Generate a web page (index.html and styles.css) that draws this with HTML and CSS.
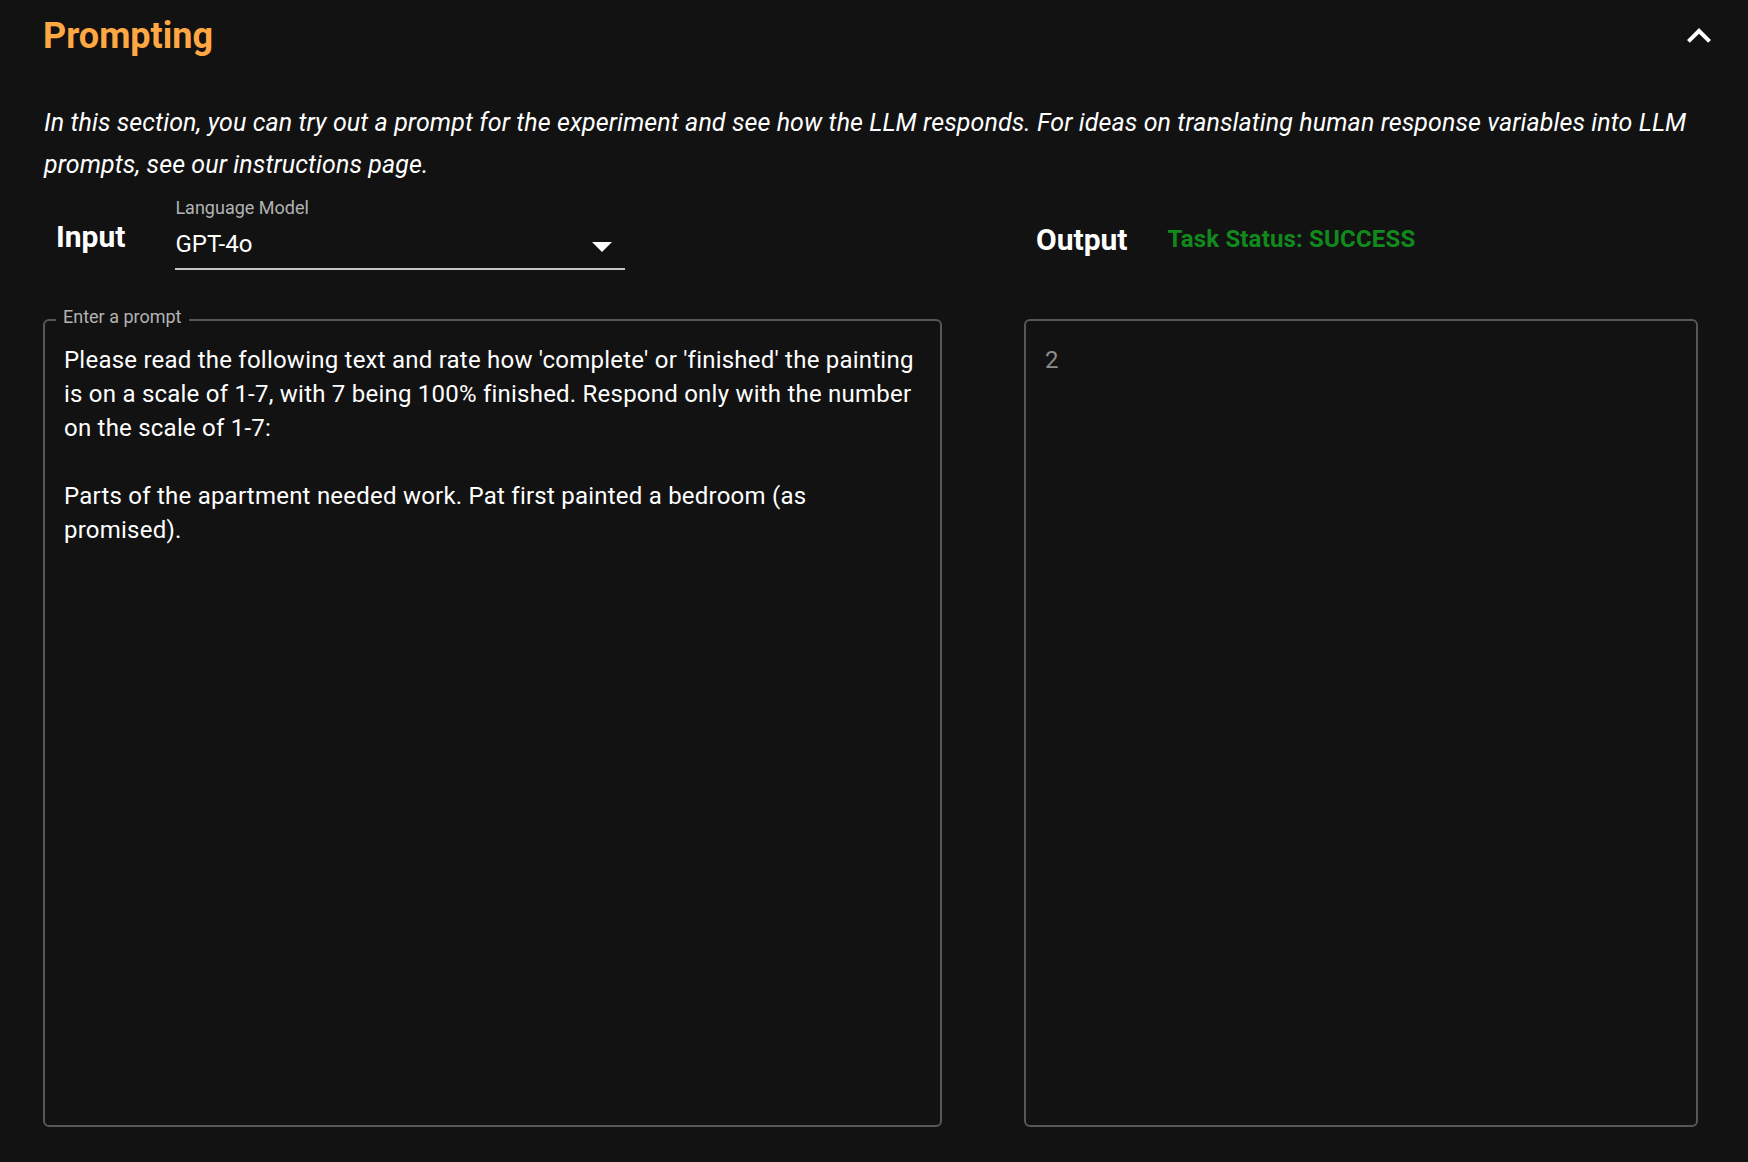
FILE: index.html
```html
<!DOCTYPE html>
<html lang="en">
<head>
<meta charset="utf-8">
<title>Prompting</title>
<link rel="stylesheet" href="styles.css">
</head>
<body>
<main class="page">
  <header class="section-header">
    <h2 class="section-title">Prompting</h2>
    <button class="collapse-btn" aria-label="Collapse">
      <svg viewBox="0 0 24 24" width="48" height="48"><path d="M12 8l-6 6 1.41 1.41L12 10.83l4.59 4.58L18 14z" fill="#ffffff"/></svg>
    </button>
  </header>
  <p class="intro">In this section, you can try out a prompt for the experiment and see how the LLM responds. For ideas on translating human response variables into LLM prompts, see our instructions page.</p>

  <div class="workspace">
    <div class="pane-head input-head">
      <h3 class="pane-title input-title">Input</h3>
      <div class="select">
        <div class="select-label">Language Model</div>
        <div class="select-field">
          <span class="select-value">GPT-4o</span>
          <svg class="select-arrow" viewBox="0 0 10 5" width="20" height="10"><path d="M0 0l5 5 5-5z" fill="#ffffff"/></svg>
        </div>
      </div>
    </div>
    <div class="pane-head output-head">
      <h3 class="pane-title output-title">Output</h3>
      <span class="status">Task Status: SUCCESS</span>
    </div>

    <fieldset class="prompt-box">
      <legend class="prompt-legend">Enter a prompt</legend>
      <div class="prompt-text">Please read the following text and rate how 'complete' or 'finished' the painting is on a scale of 1-7, with 7 being 100% finished. Respond only with the number on the scale of 1-7:

Parts of the apartment needed work. Pat first painted a bedroom (as promised).</div>
    </fieldset>
    <div class="output-box">
      <div class="output-text">2</div>
    </div>
  </div>
</main>
</body>
</html>
```

FILE: styles.css
```css
* { box-sizing: border-box; }

html, body {
  margin: 0;
  padding: 0;
  background: #121212;
}

body {
  font-family: Roboto, "Noto Sans", "Liberation Sans", sans-serif;
  color: #ffffff;
  font-size: 24px;
  letter-spacing: 0.00938em;
}

.page {
  min-height: 100vh;
  display: flex;
  flex-direction: column;
  padding: 12px 50px 35px 43px;
}

.section-header {
  display: flex;
  align-items: center;
  justify-content: space-between;
  height: 48px;
  margin-right: -25px;
}

.section-title {
  margin: 0;
  font-size: 36px;
  line-height: 42px;
  font-weight: 700;
  letter-spacing: 0;
  color: #ffa843;
}

.collapse-btn {
  display: flex;
  padding: 0;
  margin: 0;
  border: 0;
  background: transparent;
  width: 48px;
  height: 48px;
}

.intro {
  margin: 42px 0 0 1px;
  font-style: italic;
  font-size: 25px;
  letter-spacing: 0.1px;
  line-height: 42px;
}

.workspace {
  flex: 1;
  margin-top: 12px;
  display: grid;
  grid-template-columns: 899px 1fr;
  grid-template-rows: auto 1fr;
  column-gap: 82px;
  row-gap: 37px;
}

.pane-head {
  display: flex;
  align-items: flex-start;
}

.input-head { padding-left: 13px; }
.output-head { padding-left: 12px; }

.pane-title {
  margin: 0;
  font-size: 30px;
  line-height: 36px;
  font-weight: 700;
  letter-spacing: 0;
}

.input-title { margin-top: 21px; }
.output-title { margin-top: 24px; }

.select {
  margin-left: 50px;
  width: 450px;
}

.select-label {
  font-size: 18px;
  line-height: 20px;
  letter-spacing: 0;
  color: #b3b3b3;
}

.select-field {
  display: flex;
  align-items: center;
  margin-top: 10px;
  padding-bottom: 8px;
  border-bottom: 2px solid #c6c6c6;
}

.select-value {
  flex: 1;
  font-size: 24px;
  line-height: 32px;
  letter-spacing: 0;
}

.select-arrow {
  margin: 6px 13px 0 0;
}

.status {
  margin: 26px 0 0 40px;
  font-size: 24px;
  line-height: 30px;
  font-weight: 700;
  letter-spacing: 0.17px;
  color: #118a1d;
}

.prompt-box {
  margin: 0;
  min-width: 0;
  padding: 11px 19px 0 19px;
  border: 2px solid #575757;
  border-radius: 6px;
}

.prompt-legend {
  margin-left: -8px;
  padding: 0 7px 5px 7px;
  font-size: 18px;
  line-height: 20px;
  letter-spacing: 0;
  color: #b3b3b3;
}

.prompt-text {
  white-space: pre-wrap;
  font-size: 24px;
  line-height: 34px;
}

.output-box {
  margin-top: 12px;
  padding: 22px 19px 0 19px;
  border: 2px solid #575757;
  border-radius: 6px;
}

.output-text {
  font-size: 24px;
  line-height: 34px;
  color: #8c8c8c;
}
```
